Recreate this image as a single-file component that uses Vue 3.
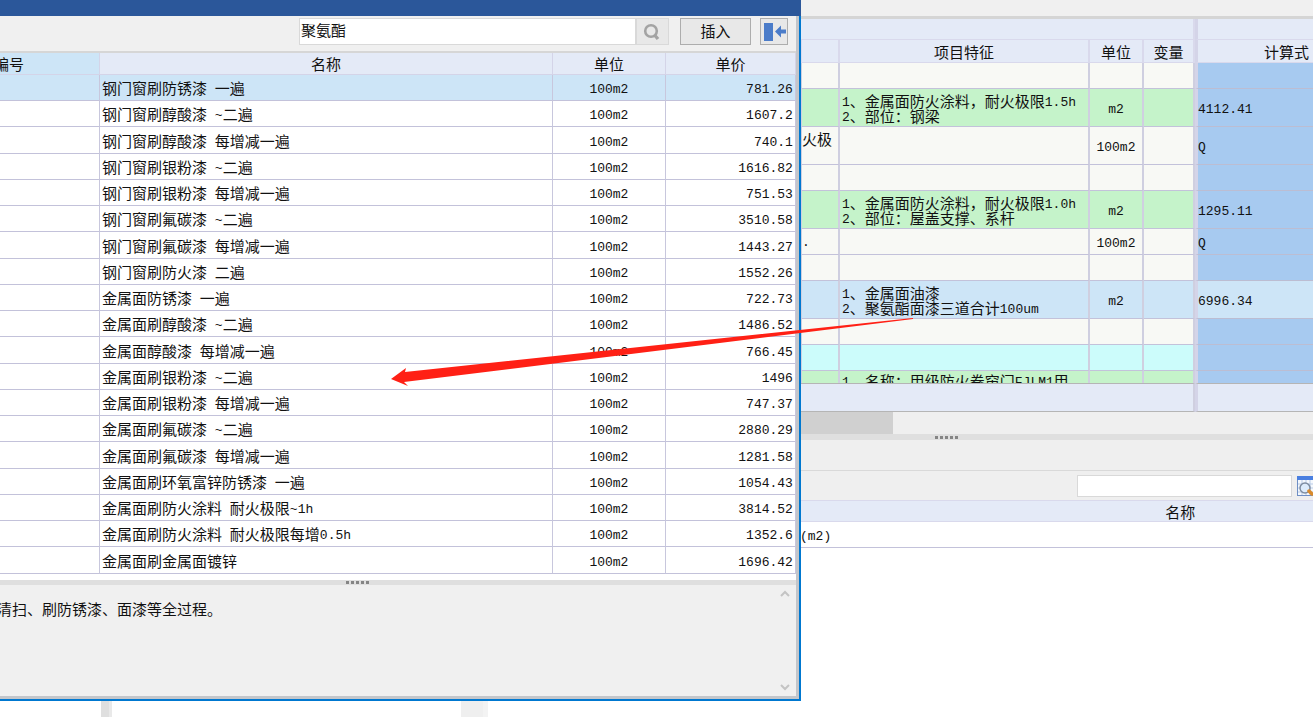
<script setup>
import { h, ref } from 'vue'

const keyword = ref('聚氨酯')
const filter = ref('')

const items = [
  ['钢门窗刷防锈漆 一遍', '781.26'],
  ['钢门窗刷醇酸漆 ~二遍', '1607.2'],
  ['钢门窗刷醇酸漆 每增减一遍', '740.1'],
  ['钢门窗刷银粉漆 ~二遍', '1616.82'],
  ['钢门窗刷银粉漆 每增减一遍', '751.53'],
  ['钢门窗刷氟碳漆 ~二遍', '3510.58'],
  ['钢门窗刷氟碳漆 每增减一遍', '1443.27'],
  ['钢门窗刷防火漆 二遍', '1552.26'],
  ['金属面防锈漆 一遍', '722.73'],
  ['金属面刷醇酸漆 ~二遍', '1486.52'],
  ['金属面醇酸漆 每增减一遍', '766.45'],
  ['金属面刷银粉漆 ~二遍', '1496'],
  ['金属面刷银粉漆 每增减一遍', '747.37'],
  ['金属面刷氟碳漆 ~二遍', '2880.29'],
  ['金属面刷氟碳漆 每增减一遍', '1281.58'],
  ['金属面刷环氧富锌防锈漆 一遍', '1054.43'],
  ['金属面刷防火涂料 耐火极限~1h', '3814.52'],
  ['金属面刷防火涂料 耐火极限每增0.5h', '1352.6'],
  ['金属面刷金属面镀锌', '1696.42'],
]

const rows = [
  { kind: 'plain' },
  { kind: 'bill tall', feature: '1、金属面防火涂料，耐火极限1.5h\n2、部位：钢梁', unit: 'm2', expr: '4112.41' },
  { kind: 'plain tall', name: '火极', unit: '100m2', expr: 'Q' },
  { kind: 'plain' },
  { kind: 'bill tall', feature: '1、金属面防火涂料，耐火极限1.0h\n2、部位：屋盖支撑、系杆', unit: 'm2', expr: '1295.11' },
  { kind: 'plain', name: '.', unit: '100m2', expr: 'Q' },
  { kind: 'plain' },
  { kind: 'picked tall', feature: '1、金属面油漆\n2、聚氨酯面漆三道合计100um', unit: 'm2', expr: '6996.34' },
  { kind: 'plain' },
  { kind: 'group' },
  { kind: 'bill cut', feature: '1、名称：甲级防火卷帘门FJLM1甲' },
]

// Half-width characters are set in a monospaced face, the rest in the CJK face.
const Txt = ({ value = '' }) =>
  h('span', { class: 'txt' },
    value.split(/([\x20-\x7e]+)/).filter(Boolean).map((part) =>
      /^[\x20-\x7e]/.test(part) ? h('span', { class: 'latin' }, part) : part))
Txt.props = ['value']
</script>

<template>
  <div class="screen">
    <main class="workspace">
      <div class="strip"></div>
      <div class="sheet-wrap">
        <table class="sheet">
          <colgroup>
            <col /><col class="c-name" /><col class="c-feature" /><col class="c-unit" /><col class="c-var" /><col class="c-expr" />
          </colgroup>
          <thead>
            <tr class="band"><th colspan="5"></th><th class="pane"></th></tr>
            <tr class="heads">
              <th></th><th></th><th>项目特征</th><th>单位</th><th>变量</th><th class="pane">计算式</th>
            </tr>
          </thead>
          <tbody>
            <tr v-for="(r, i) in rows" :key="i" :class="r.kind">
              <td></td>
              <td class="name"><Txt :value="r.name" /></td>
              <td class="feature"><div class="clip"><Txt :value="r.feature" /></div></td>
              <td class="unit"><Txt :value="r.unit" /></td>
              <td></td>
              <td class="expr pane"><Txt :value="r.expr" /></td>
            </tr>
          </tbody>
          <tfoot>
            <tr><td colspan="5"></td><td class="pane"></td></tr>
          </tfoot>
        </table>
      </div>
      <div class="hscroll"><div class="hthumb"></div></div>
      <div class="splitter"><i v-for="n in 5" :key="n"></i></div>
      <section class="lower">
        <div class="tree"></div>
        <div class="vsplit"></div>
        <div class="list"></div>
        <div class="vscroll"></div>
        <div class="detail">
          <div class="tabs"></div>
          <div class="filter-bar">
            <input v-model="filter" type="text" aria-label="筛选" />
            <button type="button" aria-label="查找">
              <svg width="20" height="20" viewBox="0 0 20 20">
                <rect x="0" y="0" width="20" height="20" fill="#6f8fc4" />
                <rect x="1" y="4" width="18" height="15" fill="#f4f8fd" />
                <rect x="0" y="0" width="20" height="4" fill="#4a7fe0" />
                <path d="M1 8h18M1 12h18M1 16h18M5 4v15M9 4v15M13 4v15" stroke="#b9cbe6" fill="none" />
                <circle cx="8" cy="12" r="5" fill="#dcebfb" stroke="#7d8ca0" stroke-width="1.5" />
                <path d="M12 15l3 3" stroke="#d98a2b" stroke-width="3.5" stroke-linecap="round" />
              </svg>
            </button>
          </div>
          <div class="detail-wrap">
            <table class="detail-table">
              <colgroup><col class="d-code" /><col /></colgroup>
              <thead><tr><th></th><th>名称</th></tr></thead>
              <tbody><tr><td></td><td><Txt value="(m2)" /></td></tr></tbody>
            </table>
          </div>
        </div>
      </section>
    </main>

    <section class="dialog">
      <div class="title"></div>
      <div class="body">
        <form class="tools" @submit.prevent>
          <input v-model="keyword" type="text" aria-label="关键字" />
          <button type="submit" class="find" aria-label="搜索">
            <svg width="20" height="20" viewBox="0 0 20 20" fill="none" stroke="#a3a3a3">
              <circle cx="9" cy="9" r="5.8" stroke-width="2.6" />
              <path d="M12.5 13l3.5 4" stroke-width="3.4" />
            </svg>
          </button>
          <button type="button" class="insert">插入</button>
          <button type="button" class="dock" aria-label="停靠">
            <svg width="24" height="20" viewBox="0 0 24 20">
              <rect x="2" y="1" width="9" height="18" fill="#4b7cc9" />
              <path d="M13 9.500l6-6v4h5v4h-5v4z" fill="#4b7cc9" />
            </svg>
          </button>
        </form>
        <table class="quota">
          <colgroup><col class="q-code" /><col /><col class="q-unit" /><col class="q-price" /></colgroup>
          <thead>
            <tr><th class="code"><span>编号</span></th><th>名称</th><th>单位</th><th>单价</th></tr>
          </thead>
          <tbody>
            <tr v-for="([name, price], i) in items" :key="name" :class="{ active: i === 0 }">
              <td></td>
              <td><Txt :value="name" /></td>
              <td class="unit"><Txt value="100m2" /></td>
              <td class="price"><Txt :value="price" /></td>
            </tr>
          </tbody>
        </table>
        <div class="splitter thin"><i v-for="n in 5" :key="n"></i></div>
        <div class="notes">
          <p>清扫、刷防锈漆、面漆等全过程。</p>
          <div class="arrows">
            <svg width="12" height="8" viewBox="0 0 12 8"><path d="M2 6l4-4 4 4" fill="none" stroke="#c4c4c4" stroke-width="2" /></svg>
            <svg width="12" height="8" viewBox="0 0 12 8"><path d="M2 2l4 4 4-4" fill="none" stroke="#c4c4c4" stroke-width="2" /></svg>
          </div>
        </div>
      </div>
    </section>

    <svg class="pointer" width="524" height="72" viewBox="0 0 524 72">
      <path d="M1 62L16 51L15 55L523 1L523 2L14 65L18 69z" fill="#ff2015" />
    </svg>
  </div>
</template>

<style>
body {
  background: #fff;
}
.txt .latin {
  font-family: "Liberation Mono", monospace;
  font-size: 13px;
  line-height: 1px;
  vertical-align: 1px;
  white-space: pre;
}
</style>

<style scoped>
.screen {
  position: relative;
  min-height: 100vh;
  overflow: hidden;
  display: flex;
  font: 15px/15px "Noto Sans CJK SC", sans-serif;
  color: #111;
}
.screen * {
  box-sizing: border-box;
}
table {
  border-collapse: separate;
  border-spacing: 0;
  table-layout: fixed;
}
th {
  font-weight: 400;
}
th,
td {
  padding: 0;
  white-space: nowrap;
  overflow: hidden;
}
input,
button {
  font: inherit;
  color: inherit;
  padding: 0;
  margin: 0;
  border-radius: 0;
}
button {
  display: flex;
  align-items: center;
  justify-content: center;
}
svg {
  display: block;
}

.workspace {
  flex: 1;
  min-width: 0;
  display: flex;
  flex-direction: column;
}
.strip {
  height: 19px;
  background: #f0f0f0;
  border-bottom: 3px solid #d5d5d5;
}
.sheet-wrap,
.detail-wrap {
  overflow: hidden;
}
.sheet {
  width: calc(100% + 64px);
}
.c-name { width: 38px; }
.c-feature { width: 250px; }
.c-unit { width: 54px; }
.c-var { width: 51px; }
.c-expr { width: 182px; }
.sheet th {
  background: #e4eaf7;
  border-right: 2px solid #d9d9ec;
  border-bottom: 1px solid #d9d9ec;
}
.sheet .band th { height: 21px; }
.sheet .heads th { height: 23px; }
.sheet td {
  height: 26px;
  border-right: 2px solid #cfcfe0;
  border-bottom: 1px solid #c3c2da;
  background: #f8f9f5;
}
.sheet .tall td { height: 38px; }
.sheet .bill td { background: #c5f3ca; }
.sheet .group td { background: #ccfcfb; }
.sheet .cut td {
  height: 12px;
  border-bottom: 0;
}
.sheet td.expr,
.sheet .bill td.expr,
.sheet .group td.expr {
  background: #a7caf0;
  border-bottom-color: #bcbdd2;
}
.sheet .picked td,
.sheet .picked td.expr { background: #cde5f7; }
.sheet .pane { border-left: 3px solid #d4d4e8; }
.sheet .name {
  vertical-align: top;
  padding-top: 4px;
}
.sheet .feature {
  white-space: pre;
  padding-left: 2px;
}
.sheet .unit { text-align: center; }
.cut .clip {
  height: 12px;
  padding-top: 2px;
  overflow: hidden;
}
.sheet tfoot td {
  height: 29px;
  background: #e4eaf7;
  border-top: 1px solid #b5b5b5;
  border-bottom: 1px solid #b5b5b5;
}
.hscroll {
  height: 22px;
  background: #efefef;
}
.hthumb {
  width: 68%;
  height: 22px;
  background: #d0d0d0;
}
.splitter {
  height: 6px;
  background: #dfdfdf;
  display: flex;
  justify-content: center;
  align-items: center;
  gap: 2px;
}
.splitter i {
  width: 3px;
  height: 3px;
  background: #858585;
}
.workspace > .splitter { padding-left: 580px; }
.splitter.thin {
  height: 5px;
  padding-right: 80px;
}
.lower {
  flex: 1;
  display: flex;
  background: #fff;
}
.tree { width: 101px; }
.vsplit {
  width: 11px;
  background: #dfdfdf;
  border-right: 3px solid #e9e9e9;
}
.list { width: 349px; }
.vscroll {
  width: 27px;
  background: #efefef;
  border-right: 5px solid #f3f3f3;
}
.detail {
  flex: 1;
  min-width: 0;
}
.tabs {
  height: 31px;
  background: #efefef;
  border-bottom: 1px solid #d9d9d9;
}
.filter-bar {
  height: 29px;
  background: #efefef;
  display: flex;
  justify-content: flex-end;
  align-items: center;
  gap: 5px;
  overflow: hidden;
}
.filter-bar input {
  width: 215px;
  height: 22px;
  border: 1px solid #d9d9d9;
  background: #fff;
}
.filter-bar button {
  width: 20px;
  height: 20px;
  margin-right: -4px;
  border: 0;
  background: none;
}
.detail-table { width: 130%; }
.d-code { width: 312px; }
.detail-table th {
  height: 22px;
  background: #e4eaf7;
  border-top: 1px solid #d9d9ec;
  border-bottom: 1px solid #d9d9ec;
}
.detail-table td {
  height: 26px;
  border-bottom: 1px solid #c3c2da;
}

.dialog {
  position: absolute;
  top: 0;
  left: 0;
  width: 61%;
}
.title {
  height: 16px;
  background: #2b579a;
}
.body {
  background: #fff;
  border-right: 2px solid #0078d0;
  border-bottom: 2px solid #0078d0;
  box-shadow: inset -3px -3px #c3c6cb;
  padding: 0 3px 3px 0;
}
.tools {
  height: 37px;
  padding: 2px 8px 0 0;
  display: flex;
  justify-content: flex-end;
  background: #f0f0f0;
  border-bottom: 2px solid #d6d6d6;
}
.tools input {
  width: 337px;
  height: 27px;
  border: 1px solid #d9d9d9;
  padding: 0 1px 4px;
  background: #fff;
}
.tools button {
  height: 27px;
  border: 1px solid #adadad;
  background: #e8e8e8;
}
.tools .find {
  width: 33px;
  border-color: #d9d9d9;
  margin-right: 11px;
}
.tools .insert {
  width: 71px;
  margin-right: 9px;
  padding-bottom: 3px;
}
.tools .dock { width: 28px; }
.quota {
  width: 100%;
  margin-bottom: 6px;
}
.q-code { width: 100px; }
.q-unit { width: 113px; }
.q-price { width: 130px; }
.quota th {
  height: 22px;
  background: #e4eaf7;
  border-right: 1px solid #d4d4e8;
  border-bottom: 1px solid #d4d4e8;
}
.quota th.code {
  background: #cde5f7;
  text-align: left;
}
.quota th.code span {
  display: block;
  margin-left: -6px;
}
.quota td {
  height: 26px;
  padding: 0 2px;
  border-right: 1px solid #c8c7dd;
  border-bottom: 1px solid #c3c2da;
}
.quota tr:nth-child(4n + 3) td { height: 27px; }
.quota .active td { background: #cde5f7; }
.quota .unit { text-align: center; }
.quota .price { text-align: right; }
.notes {
  height: 111px;
  padding: 5px 5px 5px 0;
  display: flex;
  justify-content: space-between;
  background: #f0f0f0;
}
.notes p {
  margin: 11px 0 0 -3px;
}
.arrows {
  display: flex;
  flex-direction: column;
  justify-content: space-between;
}
.pointer {
  position: absolute;
  left: 390px;
  top: 317px;
}
</style>
